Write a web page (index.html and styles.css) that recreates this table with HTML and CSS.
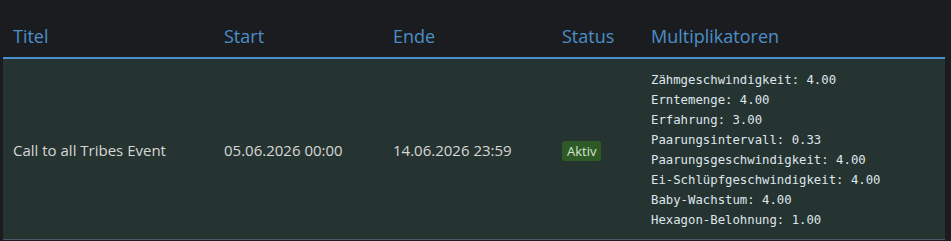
FILE: index.html
```html
<!DOCTYPE html>
<html lang="de">
<head>
    <meta charset="UTF-8">
    <meta name="viewport" content="width=device-width, initial-scale=1.0">
    <title>Events</title>
    <link rel="stylesheet" href="styles.css">
</head>
<body>
    <div class="container">
        <table class="event-table">
            <thead>
                <tr>
                    <th class="col-title">Titel</th>
                    <th class="col-start">Start</th>
                    <th class="col-end">Ende</th>
                    <th class="col-status">Status</th>
                    <th class="col-multi">Multiplikatoren</th>
                </tr>
            </thead>
            <tbody>
                <tr>
                    <td>Call to all Tribes Event</td>
                    <td>05.06.2026 00:00</td>
                    <td>14.06.2026 23:59</td>
                    <td><span class="badge active">Aktiv</span></td>
                    <td>
                        <ul class="multipliers">
                            <li>Zähmgeschwindigkeit: 4.00</li>
                            <li>Erntemenge: 4.00</li>
                            <li>Erfahrung: 3.00</li>
                            <li>Paarungsintervall: 0.33</li>
                            <li>Paarungsgeschwindigkeit: 4.00</li>
                            <li>Ei-Schlüpfgeschwindigkeit: 4.00</li>
                            <li>Baby-Wachstum: 4.00</li>
                            <li>Hexagon-Belohnung: 1.00</li>
                        </ul>
                    </td>
                </tr>
            </tbody>
        </table>
    </div>
</body>
</html>
```

FILE: styles.css
```css
body {
    font-family: "Open Sans", "Noto Sans", sans-serif;
    margin: 0;
    padding: 0;
    background-color: #1b1c20;
    color: #d6d6d6;
}

.container {
    padding: 0 6px 0 3px;
}

.event-table {
    width: 942px;
    border-collapse: collapse;
}

.event-table th {
    text-align: left;
    font-weight: normal;
    font-size: 18px;
    color: #4b8fc8;
    padding: 24px 10px 9px;
    line-height: 24px;
    border-bottom: 2px solid #4a90cf;
}

.col-title { width: 191px; }
.col-start { width: 149px; }
.col-end { width: 149px; }
.col-status { width: 69px; }

.event-table td {
    background-color: #263431;
    font-size: 15px;
    padding: 11px 10px 9px;
    vertical-align: middle;
    border-bottom: 1px solid #4d5966;
}

.multipliers {
    list-style: none;
    margin: 0;
    padding: 0;
    font-family: "DejaVu Sans Mono", monospace;
    font-size: 12.3px;
    line-height: 20px;
    color: #dfe5ec;
}

.badge {
    display: inline-block;
    font-size: 13px;
    line-height: 20px;
    padding: 0 5px;
    border-radius: 3px;
}

.badge.active {
    background-color: #2e5a27;
    color: #d5e6cc;
}
```
